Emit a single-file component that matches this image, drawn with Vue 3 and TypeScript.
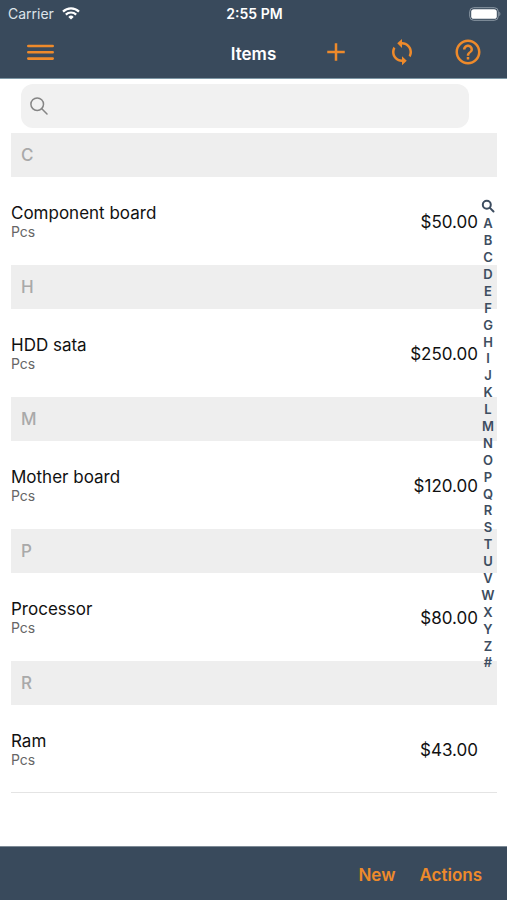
<script setup lang="ts">
import { ref, computed } from 'vue'

interface Item {
  name: string
  unit: string
  price: number
}

interface Group {
  letter: string
  items: Item[]
}

const items: Item[] = [
  { name: 'Component board', unit: 'Pcs', price: 50 },
  { name: 'HDD sata', unit: 'Pcs', price: 250 },
  { name: 'Mother board', unit: 'Pcs', price: 120 },
  { name: 'Processor', unit: 'Pcs', price: 80 },
  { name: 'Ram', unit: 'Pcs', price: 43 },
]

const letters = [...'ABCDEFGHIJKLMNOPQRSTUVWXYZ', '#']
const query = ref('')

const groups = computed<Group[]>(() => {
  const result: Group[] = []
  const needle = query.value.trim().toLowerCase()
  for (const item of items) {
    if (!item.name.toLowerCase().includes(needle)) continue
    const letter = item.name.charAt(0).toUpperCase()
    const last = result[result.length - 1]
    if (last && last.letter === letter) last.items.push(item)
    else result.push({ letter, items: [item] })
  }
  return result
})

const money = (value: number): string => `$${value.toFixed(2)}`

function anchor(letter: string): string {
  return letter === '#' ? '#group-other' : `#group-${letter}`
}
</script>

<template>
  <div class="page">
    <header class="top">
      <div class="status">
        <div class="carrier">
          <span>Carrier</span>
          <svg class="wifi" viewBox="0 0 18 13" aria-hidden="true">
            <path d="M1 4.6a11.5 11.5 0 0 1 16 0" />
            <path d="M3.8 7.6a7.5 7.5 0 0 1 10.4 0" />
            <path class="dot" d="M9 12.6 6.3 9.9a3.9 3.9 0 0 1 5.4 0z" />
          </svg>
        </div>
        <span class="clock">2:55 PM</span>
        <div class="power">
          <svg class="battery" viewBox="0 0 32 14" aria-hidden="true">
            <rect class="shell" x="0.7" y="0.7" width="28.6" height="12.6" rx="4" />
            <rect class="charge" x="2.2" y="2.2" width="25.6" height="9.6" rx="2.6" />
            <path class="cap" d="M30.3 4.8c1.4.5 1.4 3.9 0 4.4z" />
          </svg>
        </div>
      </div>
      <nav class="bar">
        <div class="side">
          <button class="menu" type="button" aria-label="Menu">
            <svg viewBox="0 0 27 17" aria-hidden="true">
              <path d="M1.3 2h24.4M1.3 8.3h24.4M1.3 14.6h24.4" />
            </svg>
          </button>
        </div>
        <h1>Items</h1>
        <div class="side tools">
          <button type="button" aria-label="Add item">
            <svg viewBox="0 0 24 24" aria-hidden="true"><path d="M19 13h-6v6h-2v-6H5v-2h6V5h2v6h6v2z" /></svg>
          </button>
          <button type="button" aria-label="Sync">
            <svg viewBox="0 0 24 24" aria-hidden="true">
              <path d="M12 4V1.5L8.2 5l3.8 3.7V6c3.31 0 6 2.69 6 6 0 1.01-.25 1.97-.7 2.8l1.46 1.46C19.54 15.03 20 13.57 20 12c0-4.42-3.58-8-8-8zm0 14c-3.31 0-6-2.69-6-6 0-1.01.25-1.97.7-2.8L5.24 7.74C4.46 8.97 4 10.43 4 12c0 4.42 3.58 8 8 8v2.5l3.8-3.5-3.8-3.7V18z" />
            </svg>
          </button>
          <button type="button" aria-label="Help">
            <svg viewBox="0 0 24 24" aria-hidden="true">
              <path d="M11 18h2v-2h-2v2zm1-16C6.48 2 2 6.48 2 12s4.48 10 10 10 10-4.48 10-10S17.52 2 12 2zm0 18c-4.41 0-8-3.59-8-8s3.59-8 8-8 8 3.59 8 8-3.59 8-8 8zm0-14c-2.21 0-4 1.79-4 4h2c0-1.1.9-2 2-2s2 .9 2 2c0 2-3 1.75-3 5h2c0-2.25 3-2.5 3-5 0-2.21-1.79-4-4-4z" />
            </svg>
          </button>
        </div>
      </nav>
    </header>

    <main class="content">
      <label class="search">
        <svg viewBox="0 0 18 18" aria-hidden="true">
          <circle cx="7.2" cy="7.2" r="6.3" />
          <path d="m11.8 11.8 5.2 5.2" />
        </svg>
        <input v-model="query" type="search" aria-label="Search items" />
      </label>

      <section v-for="group in groups" :id="`group-${group.letter}`" :key="group.letter" class="group">
        <h2>{{ group.letter }}</h2>
        <ul>
          <li v-for="item in group.items" :key="item.name">
            <div>
              <p class="name">{{ item.name }}</p>
              <p class="unit">{{ item.unit }}</p>
            </div>
            <span class="price">{{ money(item.price) }}</span>
          </li>
        </ul>
      </section>

      <nav class="index" aria-label="Alphabet">
        <a href="#" aria-label="Search">
          <svg viewBox="0 0 14 14" aria-hidden="true">
            <circle cx="5.8" cy="5.8" r="4" />
            <path d="m8.9 8.9 3.6 3.6" />
          </svg>
        </a>
        <a v-for="letter in letters" :key="letter" :href="anchor(letter)">{{ letter }}</a>
      </nav>
    </main>

    <footer class="bottom">
      <button type="button">New</button>
      <button type="button">Actions</button>
    </footer>
  </div>
</template>

<style>
body {
  margin: 0;
  background: #fff;
}
</style>

<style scoped>
.page {
  display: flex;
  flex-direction: column;
  min-height: 100vh;
  font-family: Inter, "Liberation Sans", sans-serif;
  color: #111;
}

button {
  padding: 0;
  border: 0;
  background: none;
  color: #ee8a2b;
  font: inherit;
  cursor: pointer;
}

svg {
  display: block;
}

.top {
  background: #394a5c;
  color: #fff;
  border-bottom: 1px solid #7d97a5;
}

.status {
  display: grid;
  grid-template-columns: 1fr auto 1fr;
  align-items: center;
  height: 27px;
  padding: 0 6px 0 8px;
  font-size: 14px;
}

.carrier {
  display: flex;
  align-items: center;
  gap: 8px;
  color: #dde4ea;
}

.wifi {
  width: 18px;
  height: 13px;
  fill: none;
  stroke: #fff;
  stroke-width: 2.2;
}

.wifi .dot {
  fill: #fff;
  stroke: none;
}

.clock {
  font-weight: 600;
}

.power {
  display: flex;
  justify-content: flex-end;
}

.battery {
  width: 32px;
  height: 14px;
}

.shell {
  fill: none;
  stroke: #8d99a5;
}

.charge {
  fill: #fff;
}

.cap {
  fill: #8d99a5;
}

.bar {
  display: grid;
  grid-template-columns: 1fr auto 1fr;
  align-items: start;
  height: 51px;
  padding: 0 6px;
}

.bar h1 {
  margin: 0;
  font-size: 17px;
  font-weight: 600;
  line-height: 54px;
}

.side {
  display: flex;
  align-items: center;
  height: 50px;
}

.menu {
  padding: 12px 21px;
}

.menu svg {
  width: 27px;
  height: 17px;
  stroke: currentColor;
  stroke-width: 2.6;
  stroke-linecap: round;
}

.tools {
  justify-content: flex-end;
}

.tools button {
  display: grid;
  place-items: center;
  width: 66px;
  height: 48px;
}

.tools svg {
  width: 30px;
  height: 30px;
  fill: currentColor;
}

.content {
  position: relative;
  flex: 1;
  padding: 5px 10px 52px 11px;
}

.search {
  display: flex;
  align-items: center;
  gap: 10px;
  height: 44px;
  margin: 0 28px 5px 10px;
  padding: 0 9px;
  box-sizing: border-box;
  border-radius: 12px;
  background: #f1f1f1;
}

.search svg {
  width: 18px;
  height: 18px;
  fill: none;
  stroke: #858585;
  stroke-width: 1.5;
  stroke-linecap: round;
}

.search input {
  flex: 1;
  min-width: 0;
  border: 0;
  outline: 0;
  background: none;
  font: inherit;
}

.group h2 {
  margin: 0;
  padding: 0 10px;
  background: #eee;
  color: #a9a9a9;
  font-size: 17px;
  font-weight: 500;
  line-height: 44px;
}

.group ul {
  margin: 0;
  padding: 0;
  list-style: none;
}

.group li {
  display: flex;
  align-items: center;
  justify-content: space-between;
  box-sizing: border-box;
  height: 88px;
  padding: 2px 19px 0 0;
}

.group:last-of-type li:last-child {
  border-bottom: 1px solid #e4e4e4;
}

.name,
.unit {
  margin: 0;
}

.name {
  font-size: 17px;
  line-height: 20px;
}

.unit {
  color: #666;
  font-size: 14px;
  line-height: 18px;
}

.price {
  font-size: 17px;
}

.index {
  position: absolute;
  top: 119px;
  right: 10px;
  display: flex;
  flex-direction: column;
  width: 18px;
  height: 473px;
}

.index a {
  flex: 1;
  display: grid;
  place-items: center;
  color: #3d4d60;
  font-size: 13px;
  font-weight: 600;
  line-height: 16px;
  text-decoration: none;
}

.index svg {
  width: 14px;
  height: 14px;
  fill: none;
  stroke: currentColor;
  stroke-width: 2;
  stroke-linecap: round;
}

.bottom {
  display: flex;
  align-items: center;
  justify-content: flex-end;
  gap: 24px;
  height: 54px;
  padding: 2px 25px 0;
  border-top: 1px solid #7d8a96;
  box-sizing: border-box;
  background: #394a5c;
  font-size: 17px;
  font-weight: 600;
}
</style>
